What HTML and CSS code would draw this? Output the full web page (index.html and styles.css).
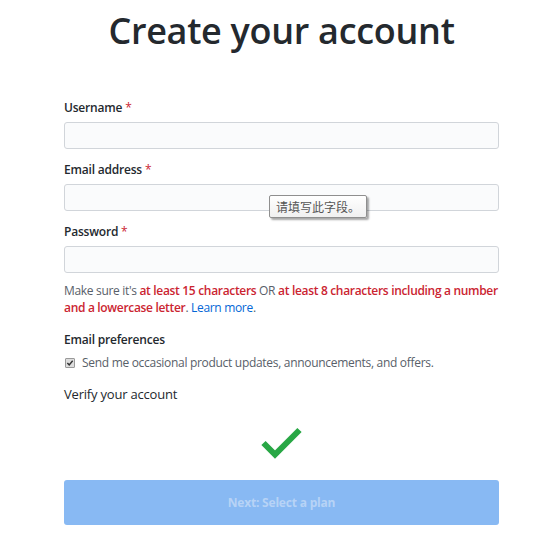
FILE: index.html
```html
<!DOCTYPE html>
<html>
<head>
<meta charset="utf-8">
<link rel="stylesheet" href="styles.css">
</head>
<body>
<div class="page">
  <h1 class="title">Create your account</h1>
  <form class="form">
    <div class="field">
      <label class="label">Username <span class="req">*</span></label>
      <div class="input"></div>
    </div>
    <div class="field">
      <label class="label">Email address <span class="req">*</span></label>
      <div class="input-wrap">
        <div class="input"></div>
        <div class="tooltip">请填写此字段。</div>
      </div>
    </div>
    <div class="field field-last">
      <label class="label">Password <span class="req">*</span></label>
      <div class="input"></div>
    </div>
    <p class="help">Make sure it's <span class="red">at least 15 characters</span> OR <span class="red">at least 8 characters including a number and a lowercase letter</span>. <span class="link">Learn more</span>.</p>
    <div class="prefs">
      <div class="label">Email preferences</div>
      <div class="check-row">
        <span class="checkbox"><svg width="9" height="9" viewBox="0 0 9 9"><path d="M1.5 4.5 L3.6 6.6 L7.5 2" fill="none" stroke="#333" stroke-width="1.6"/></svg></span>
        <span>Send me occasional product updates, announcements, and offers.</span>
      </div>
    </div>
    <div class="verify">Verify your account</div>
    <div class="checkmark">
      <svg width="42" height="34" viewBox="0 0 42 34"><path d="M2.5 17 L14 28.5 L38.5 4" fill="none" stroke="#28a745" stroke-width="6"/></svg>
    </div>
    <div class="button">Next: Select a plan</div>
  </form>
</div>
</body>
</html>
```
FILE: styles.css
```css
html, body {
  margin: 0;
  padding: 0;
  background: #fff;
}
body {
  font-family: "Open Sans", "Noto Sans", sans-serif;
  color: #24292e;
}
.page {
  width: 435px;
  margin-left: 64px;
}
.title {
  margin: 7px 0 0;
  text-align: center;
  font-size: 36px;
  font-weight: 600;
  line-height: 48px;
  letter-spacing: -0.3px;
  color: #24292e;
}
.form {
  margin-top: 44px;
}
.field {
  margin-bottom: 12px;
}
.field-last {
  margin-bottom: 0;
}
.label {
  display: block;
  font-size: 12px;
  font-weight: 600;
  line-height: 18px;
  margin-bottom: 5px;
  letter-spacing: -0.2px;
}
.req {
  color: #cb2431;
  font-weight: 400;
}
.input-wrap {
  position: relative;
}
.input {
  height: 25px;
  border: 1px solid #d1d5da;
  border-radius: 3px;
  background: #fafbfc;
}
.tooltip {
  position: absolute;
  left: 205px;
  top: 11px;
  height: 21px;
  padding: 0 6px;
  font-family: "Noto Sans CJK SC", sans-serif;
  font-size: 12px;
  line-height: 21px;
  color: #555;
  background: linear-gradient(#fff, #f0f0f0);
  border: 1px solid #8f8f8f;
  border-radius: 2px;
  box-shadow: 2px 2px 2px rgba(0,0,0,0.35);
}
.help {
  margin: 9px 0 0;
  font-size: 12px;
  line-height: 17px;
  color: #586069;
  letter-spacing: -0.32px;
}
.red {
  color: #cb2431;
  font-weight: 600;
}
.link {
  color: #0366d6;
}
.prefs {
  margin-top: 15px;
}
.prefs .label {
  margin-bottom: 5px;
}
.check-row {
  display: flex;
  align-items: center;
  gap: 7px;
  font-size: 12px;
  line-height: 18px;
  color: #586069;
  letter-spacing: -0.3px;
}
.checkbox {
  width: 8px;
  height: 8px;
  border: 1px solid #999;
  border-radius: 1px;
  background: #ddd;
  display: flex;
  align-items: center;
  justify-content: center;
  margin-left: 1px;
}
.checkbox svg {
  width: 8px;
  height: 8px;
}
.verify {
  margin-top: 13px;
  font-size: 13px;
  font-weight: 500;
  line-height: 18px;
  letter-spacing: -0.2px;
}
.checkmark {
  display: flex;
  justify-content: center;
  margin-top: 23px;
  height: 36px;
}
.button {
  margin-top: 18px;
  height: 45px;
  border-radius: 3px;
  background: #88b9f3;
  color: #b7d3f6;
  font-size: 12px;
  font-weight: 700;
  display: flex;
  align-items: center;
  justify-content: center;
  letter-spacing: -0.2px;
}
```
